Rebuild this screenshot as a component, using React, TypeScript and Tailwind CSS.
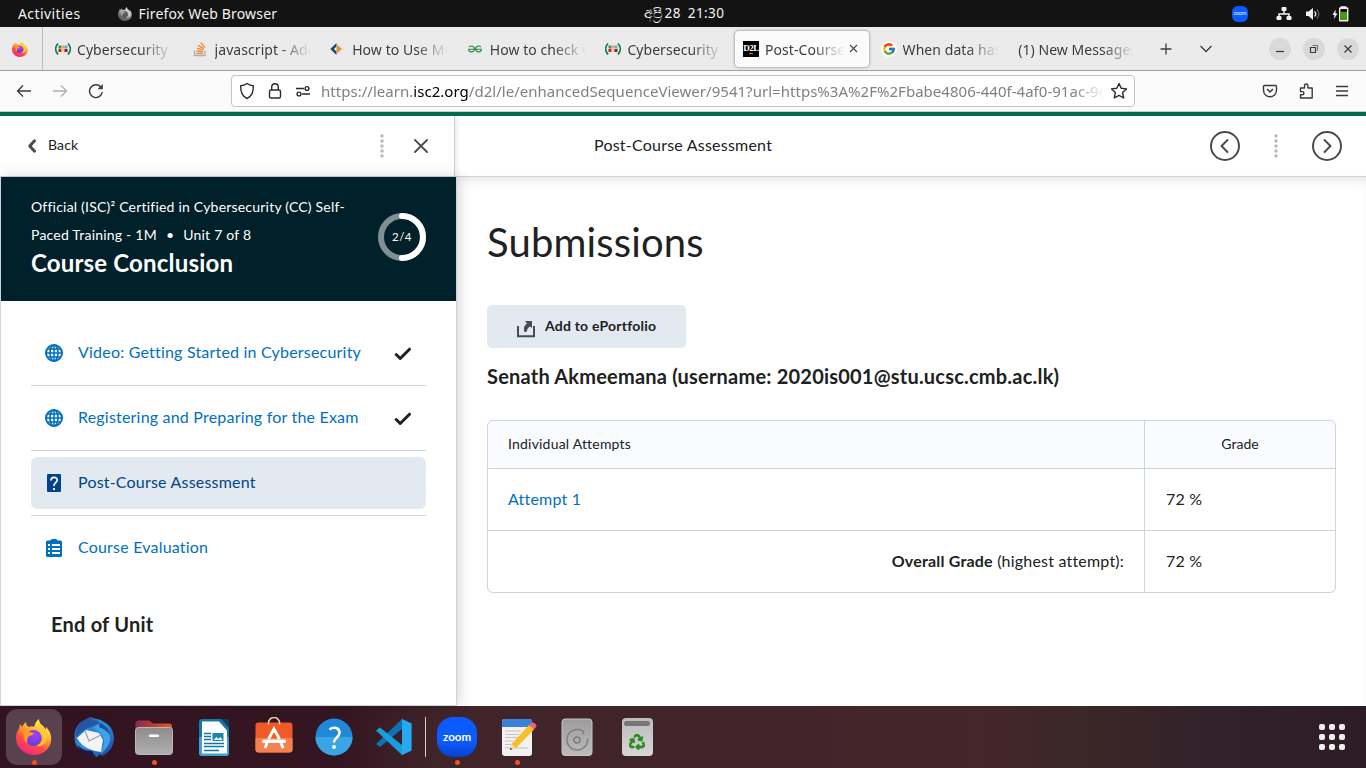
import React from 'react';
import { SiGeeksforgeeks } from 'react-icons/si';
import { FcGoogle } from 'react-icons/fc';
import { FaRecycle } from 'react-icons/fa';

function FirefoxLogo({ size, gray = false, id }: { size: number; gray?: boolean; id: string }) {
  return (
    <svg width={size} height={size} viewBox="0 0 36 36" className={gray ? 'shrink-0 grayscale' : 'shrink-0'}>
      <defs>
        <linearGradient id={id + 'a'} x1="0.8" y1="0" x2="0.25" y2="1">
          <stop offset="0.1" stopColor="#fff44f" />
          <stop offset="0.4" stopColor="#ffa930" />
          <stop offset="0.65" stopColor="#ff5040" />
          <stop offset="1" stopColor="#f0208c" />
        </linearGradient>
        <radialGradient id={id + 'b'} cx="0.6" cy="0.3" r="0.8">
          <stop offset="0" stopColor="#a040ff" />
          <stop offset="1" stopColor="#5a3fd0" />
        </radialGradient>
      </defs>
      <path
        d="M23 0c0 4 2 5 4 7 1 1 2 2 3 4l0-3c4 4 6 9 5 14-1 8-8 14-17 14S0 29 0 19c0-4 1-7 3-9l1-5 2 3c1-2 2-3 4-5 0 3 1 4 3 5 2-1 4-1 5 0 1-3 2-6 5-8z"
        fill={`url(#${id}a)`}
      />
      <circle cx="17.500" cy="19" r="8" fill={`url(#${id}b)`} />
      <path d="M5 11c3-2 6-1 9 2l4 1c-1 2-3 3-5 3-1 2-3 4-1 7-3-1-5-4-4-8-1-2-2-4-3-5z" fill="#ff9a22" />
      <path d="M18 9c5 0 9 4 9 9 0 4-3 8-7 9 6 1 11-3 11-9 0-5-4-10-9-14 1 2 0 4-4 5z" fill="#ffc936" />
    </svg>
  );
}

function IscIcon() {
  return (
    <svg width="16" height="16" viewBox="0 0 16 16" className="shrink-0">
      <path d="M3 2.500C0 5.500 0 10 3 13.500M13 2.500c3 3 3 7.500 0 11" fill="none" stroke="#0b7a50" strokeWidth="1.700" />
      <rect x="3.500" y="4.500" width="3" height="3" fill="#3a8a8c" />
      <rect x="6.500" y="4.500" width="3" height="3" fill="#f0aa3c" />
      <rect x="9.500" y="4.500" width="3" height="3" fill="#7aa3d2" />
      <rect x="3.500" y="8" width="3" height="3" fill="#ca1b36" />
      <rect x="6.500" y="8" width="3" height="3" fill="#efd06b" />
      <rect x="9.500" y="8" width="3" height="3" fill="#881f36" />
    </svg>
  );
}

function StackIcon() {
  return (
    <svg width="16" height="16" viewBox="0 0 16 16" className="shrink-0">
      <path d="M1.500 9.500v5h10.500v-5" fill="none" stroke="#a9abad" strokeWidth="1.300" />
      <path d="M3.500 12.300h6.500M3.500 10l6.500.7M4 7.200l6.300 1.800M5.300 4.400l5.600 3.300M7.800 1.600l4 5" stroke="#f48024" strokeWidth="1.300" fill="none" />
    </svg>
  );
}

function CodeDiamond() {
  return (
    <svg width="16" height="16" viewBox="0 0 16 16" className="shrink-0">
      <path d="M6.500 2v12L.3 8z" fill="#174a68" />
      <path d="M6.500 5.500v5L4 8z" fill="#fff" />
      <path d="M7 4l5 4-5 4z" fill="#f58a25" />
      <path d="M8 2.500L13.500 8 8 13.500" fill="none" stroke="#d8dde0" strokeWidth="1" />
    </svg>
  );
}

function D2lIcon() {
  return (
    <span className="flex h-4 w-4 shrink-0 items-center justify-center bg-black font-['Liberation_Serif',serif] text-[9px] font-bold leading-none tracking-[-0.5px] text-white">
      D<span className="border-b border-orange-500">2</span>L
    </span>
  );
}

type Tab = { icon?: React.ReactNode; label: string; active?: boolean };

const tabs: Tab[] = [
  { icon: <IscIcon />, label: 'Cybersecurity' },
  { icon: <StackIcon />, label: 'javascript - Add' },
  { icon: <CodeDiamond />, label: 'How to Use Mu' },
  { icon: <SiGeeksforgeeks size={14} color="#2f8d46" className="mr-[2px] shrink-0" />, label: 'How to check w' },
  { icon: <IscIcon />, label: 'Cybersecurity' },
  { icon: <D2lIcon />, label: 'Post-Course', active: true },
  {
    icon: (
      <span className="flex h-4 w-4 shrink-0 items-center justify-center rounded-full bg-white">
        <FcGoogle size={14} />
      </span>
    ),
    label: 'When data has',
  },
  { label: '(1) New Messages' },
];

function TopBar() {
  return (
    <div className="grid h-[27px] grid-cols-[1fr_auto_1fr] items-center bg-[#131313] text-[14px] leading-none text-[#f2f2f2]">
      <div className="flex items-center pl-[18px]">
        <span className="tracking-[0.42px]">Activities</span>
        <span className="ml-[37px] flex items-center gap-[7px]">
          <FirefoxLogo size={14} gray id="ffg" />
          <span className="tracking-[0.17px]">Firefox Web Browser</span>
        </span>
      </div>
      <div className="flex items-baseline gap-[7px] pb-px pl-[2px] text-[13.500px] tracking-[0.4px]">
        <span className="whitespace-nowrap">
          <span className="inline-block w-[21px] text-[14px] font-light tracking-[0px]">අප්‍රි</span>28
        </span>
        <span>21:30</span>
      </div>
      <div className="flex items-center justify-end pr-[17px]">
        <span className="flex h-4 w-4 items-center justify-center rounded-[6px] bg-[#0b5cff] text-[5px] text-white">zoom</span>
        <svg className="ml-[28px]" width="16" height="16" viewBox="0 0 16 16" fill="#f2f2f2">
          <rect x="5.500" y="1" width="5" height="4" rx="1" />
          <rect x="0.500" y="10" width="5" height="4" rx="1.200" />
          <rect x="10.500" y="10" width="5" height="4" rx="1.200" />
          <path d="M3 11V8h10v3M8 4v4" fill="none" stroke="#f2f2f2" strokeWidth="1.500" />
        </svg>
        <svg className="ml-3" width="16" height="16" viewBox="0 0 16 16">
          <path d="M2 5.500h2.500L9 2v12l-4.500-4H2z" fill="#f2f2f2" />
          <path d="M10.500 5.500c1.500 1.500 1.500 3.500 0 5" stroke="#f2f2f2" strokeWidth="1.300" fill="none" />
          <path d="M12.800 3.500c2.600 2.800 2.600 6.200 0 9" stroke="#666" strokeWidth="1.200" fill="none" />
        </svg>
        <svg className="ml-3" width="17" height="16" viewBox="0 0 17 16">
          <path d="M3.500 3.500L.5 9H2.500L2 13l3.500-5.500H3.500z" fill="#f2f2f2" />
          <path d="M9 1.500h5V1H9zM7.700 2.200h8v12.500h-8z" fill="none" stroke="#f2f2f2" strokeWidth="1.400" strokeLinejoin="round" />
          <path d="M8.500 6h6.500v8H8.500z" fill="#4e9a06" />
        </svg>
      </div>
    </div>
  );
}

function TabStrip() {
  return (
    <div className="flex h-11 items-center border-b border-[#a0a0a0] bg-[#ebebeb] text-[14px] text-[#3d3d3d]">
      <div className="flex h-full w-[43px] items-center border-r border-[#bdbdbd] pl-3">
        <FirefoxLogo size={16} id="fft" />
      </div>
      <div className="flex h-full items-center pl-[4px]">
        {tabs.map((t, i) => (
          <div key={i} className="flex h-full w-[137.600px] items-center">
            <div
              className={
                t.active
                  ? 'flex h-9 w-[134px] items-center gap-[6px] rounded bg-[#fbfbfb] pl-2 shadow-[0_0_3px_rgba(0,0,0,0.5)]'
                  : 'flex h-9 w-[136px] items-center gap-[6px] pl-2'
              }
            >
              {t.icon}
              <span
                className={
                  (t.active ? 'w-[80px] ' : t.icon ? 'w-[96px] ' : 'w-[116px] ') +
                  'overflow-hidden whitespace-nowrap pt-px tracking-[0.06px] [mask-image:linear-gradient(to_left,transparent,black_32px)]'
                }
              >
                {t.label}
              </span>
              {t.active && (
                <svg width="9" height="9" viewBox="0 0 9 9" className="shrink-0 -ml-[2px]">
                  <path d="M1 1l7 7M8 1L1 8" stroke="#444" strokeWidth="1.100" />
                </svg>
              )}
            </div>
          </div>
        ))}
      </div>
      <svg className="ml-[11px]" width="14" height="14" viewBox="0 0 14 14">
        <path d="M7 1.500v11M1.500 7h11" stroke="#3d3d3d" strokeWidth="1.300" />
      </svg>
      <svg className="ml-[26px]" width="14" height="14" viewBox="0 0 14 14">
        <path d="M1.500 4L7 9.500 12.500 4" fill="none" stroke="#3d3d3d" strokeWidth="1.300" />
      </svg>
      <div className="ml-auto flex gap-3 pr-[7px]">
        <svg width="22" height="22" viewBox="0 0 22 22">
          <circle cx="11" cy="11" r="11" fill="#d9d9d9" />
          <path d="M7 13.500h8" stroke="#3d3d3d" strokeWidth="1.200" />
        </svg>
        <svg width="22" height="22" viewBox="0 0 22 22" fill="none" stroke="#3d3d3d">
          <circle cx="11" cy="11" r="11" fill="#d9d9d9" stroke="none" />
          <path d="M7.500 9.500h5v5h-5z" strokeWidth="1.200" />
          <path d="M9.500 7.500h5v5" strokeWidth="0.700" />
        </svg>
        <svg width="22" height="22" viewBox="0 0 22 22">
          <circle cx="11" cy="11" r="11" fill="#d9d9d9" />
          <path d="M7.500 7.500l7 7M14.500 7.500l-7 7" stroke="#3d3d3d" strokeWidth="1.300" />
        </svg>
      </div>
    </div>
  );
}

function Toolbar() {
  return (
    <div className="flex h-[41px] items-center border-b border-[#ccc] bg-[#fbfbfb]">
      <svg className="ml-4" width="16" height="16" viewBox="0 0 16 16" fill="none" stroke="#3a3a3a" strokeWidth="1.300">
        <path d="M15 8H1.500M7 2.500L1.500 8 7 13.500" />
      </svg>
      <svg className="ml-5" width="16" height="16" viewBox="0 0 16 16" fill="none" stroke="#b0b0b0" strokeWidth="1.300">
        <path d="M1 8h13.500M9 2.500L14.500 8 9 13.500" />
      </svg>
      <svg className="ml-5" width="16" height="16" viewBox="0 0 16 16" fill="none" stroke="#3a3a3a" strokeWidth="1.400">
        <path d="M14.300 9A6.400 6.400 0 1 1 12.800 4" />
        <path d="M14.800 1v5.300H9.500z" fill="#3a3a3a" stroke="none" />
      </svg>
      <div className="ml-[127px] flex h-8 w-[904px] items-center rounded border border-[#c4c4c6] bg-white">
        <svg className="ml-[7px]" width="16" height="18" viewBox="0 0 16 18" fill="none" stroke="#2b2b2b" strokeWidth="1.400">
          <path d="M8 1.500c2 1.500 4 2.200 6.300 2.300C14.600 10 12.500 14.500 8 16.500 3.500 14.500 1.400 10 1.700 3.800 4 3.700 6 3 8 1.500z" strokeLinejoin="round" />
        </svg>
        <svg className="ml-3" width="16" height="18" viewBox="0 0 16 18" fill="none" stroke="#2b2b2b" strokeWidth="1.400">
          <rect x="2.500" y="8" width="11" height="8" rx="1.500" />
          <path d="M4.700 8V5a3.300 3.300 0 0 1 6.600 0v3" />
        </svg>
        <svg className="ml-3" width="16" height="16" viewBox="0 0 16 16" fill="none" stroke="#2b2b2b" strokeWidth="1.400">
          <path d="M1 5.500h8M7 11h8" />
          <circle cx="12" cy="5.500" r="1.900" />
          <circle cx="4" cy="11" r="1.900" />
        </svg>
        <span className="ml-[10px] w-[784px] overflow-hidden whitespace-nowrap text-[15px] leading-[22px] tracking-[0.03px] text-[#808080] [mask-image:linear-gradient(to_left,transparent,black_32px)]">
          https://learn.<span className="text-black">isc2.org</span>/d2l/le/enhancedSequenceViewer/9541?url=https%3A%2F%2Fbabe4806-440f-4af0-91ac-9c
        </span>
        <svg className="ml-[5px] shrink-0" width="18" height="18" viewBox="0 0 18 18" fill="none" stroke="#2b2b2b" strokeWidth="1.400" strokeLinejoin="round">
          <path d="M9 1.500l2.200 4.800 5.300.6-3.900 3.600 1.100 5.500L9 13.400 4.300 16l1.100-5.500L1.500 6.900l5.300-.6z" />
        </svg>
      </div>
      <div className="ml-auto flex gap-5 pr-4">
        <svg width="16" height="16" viewBox="0 0 16 16" fill="none" stroke="#3a3a3a" strokeWidth="1.400">
          <path d="M2.500 2.500h11a1 1 0 0 1 1 1V7c0 9-13 9-13 0V3.500a1 1 0 0 1 1-1z" />
          <path d="M5 6l3 3 3-3" strokeWidth="1.500" />
        </svg>
        <svg width="16" height="16" viewBox="0 0 16 16" fill="none" stroke="#3a3a3a" strokeWidth="1.400" strokeLinejoin="round">
          <path d="M2.500 7.500V5h4V2.700a1.700 1.700 0 0 1 3.400 0V5h4.300v10H2.500v-3.200h1.800a1.600 1.600 0 0 0 0-3.200H2.500z" />
        </svg>
        <svg width="16" height="16" viewBox="0 0 16 16" stroke="#3a3a3a" strokeWidth="1.300">
          <path d="M2 3.500h12M2 8h12M2 12.500h12" />
        </svg>
      </div>
    </div>
  );
}

function Dots() {
  return (
    <svg width="4" height="24" viewBox="0 0 4 24" fill="#b4b9c0">
      {[2, 7, 12, 17, 22].map((y) => (
        <circle key={y} cx="2" cy={y} r="1.700" />
      ))}
    </svg>
  );
}

function CircleArrow({ d }: { d: string }) {
  return (
    <svg width="30" height="30" viewBox="0 0 30 30" fill="none" stroke="#494c4e">
      <circle cx="15" cy="15" r="14" strokeWidth="2" />
      <path d={d} strokeWidth="2" strokeLinecap="round" strokeLinejoin="round" />
    </svg>
  );
}

function PageHeader() {
  return (
    <div className="flex h-[61px] shrink-0 border-b border-[#cfcfcf]">
      <div className="flex w-[455px] items-center border-r border-[#cdd0d4] bg-white pl-7">
        <svg width="9" height="14" viewBox="0 0 9 14">
          <path d="M6.500 1.800L1.800 7l4.700 5.200" fill="none" stroke="#494c4e" strokeWidth="3" strokeLinecap="round" strokeLinejoin="round" />
        </svg>
        <span className="ml-[11px] pb-[3px] text-[14px] tracking-[0.15px] text-[#202122]">Back</span>
        <div className="ml-auto flex items-center gap-[30px] pr-[26px]">
          <Dots />
          <svg width="14" height="14" viewBox="0 0 14 14">
            <path d="M1 1l12 12M13 1L1 13" stroke="#494c4e" strokeWidth="1.800" strokeLinecap="round" />
          </svg>
        </div>
      </div>
      <div className="flex grow items-center bg-white pl-[139px] pr-6 shadow-[inset_4px_0_4px_-2px_rgba(0,0,0,0.08)]">
        <span className="pb-[2px] text-[16px] leading-5 tracking-[0.22px] text-[#202122]">Post-Course Assessment</span>
        <div className="ml-auto flex items-center gap-[34px]">
          <CircleArrow d="M17.500 9l-6 6 6 6" />
          <Dots />
          <CircleArrow d="M12.500 9l6 6-6 6" />
        </div>
      </div>
    </div>
  );
}

function Globe() {
  return (
    <svg width="18" height="18" viewBox="0 0 18 18" fill="none" stroke="#006fbf" strokeWidth="2">
      <circle cx="9" cy="9" r="8" />
      <ellipse cx="9" cy="9" rx="4" ry="8" strokeWidth="1.600" />
      <path d="M9 1v16M1 9h16M2.500 5h13M2.500 13h13" strokeWidth="1.500" />
    </svg>
  );
}

function QuizIcon() {
  return (
    <svg width="18" height="18" viewBox="0 0 18 18">
      <rect x="2" width="14" height="18" rx="1" fill="#004489" />
      <path d="M6 6.500c0-4 6.300-4 6.300-.4C12.300 8.500 9 8.500 9 12" fill="none" stroke="#fff" strokeWidth="1.700" />
      <rect x="8" y="14" width="2" height="2" fill="#fff" />
    </svg>
  );
}

function SurveyIcon() {
  return (
    <svg width="18" height="18" viewBox="0 0 18 18">
      <path d="M2.500 1.500H5L7 0h4l2 1.500h2.500A1.500 1.500 0 0 1 17 3v13.500a1.500 1.500 0 0 1-1.500 1.500h-13A1.500 1.500 0 0 1 1 16.500V3a1.500 1.500 0 0 1 1.500-1.500z" fill="#006fbf" />
      <path d="M3 5h2v2H3zM3 9h2v2H3zM3 13h2v2H3zM7 5h8v2H7zM7 9h8v2H7zM7 13h8v2H7z" fill="#fff" />
    </svg>
  );
}

const units = [
  { icon: <Globe />, label: 'Video: Getting Started in Cybersecurity', done: true, active: false },
  { icon: <Globe />, label: 'Registering and Preparing for the Exam', done: true, active: false },
  { icon: <QuizIcon />, label: 'Post-Course Assessment', done: false, active: true },
  { icon: <SurveyIcon />, label: 'Course Evaluation', done: false, active: false },
];

function Sidebar() {
  return (
    <aside className="z-10 flex w-[457px] shrink-0 flex-col border-x border-b border-[#cdd5dc] bg-white shadow-[2px_0_14px_rgba(0,0,0,0.16)]">
      <div className="flex h-[124px] items-start bg-[#00202a] pl-[30px] pr-[30px] pt-4 text-white">
        <div className="w-[330px]">
          <p className="whitespace-nowrap text-[14px] leading-7 tracking-[0.21px]">
            Official (ISC)² Certified in Cybersecurity (CC) Self-
            <br />
            Paced Training - 1M<span className="mx-[9px]">•</span>Unit 7 of 8
          </p>
          <h2 className="text-[24px] font-bold leading-7 tracking-[0.18px]">Course Conclusion</h2>
        </div>
        <svg className="ml-auto mt-5" width="48" height="48" viewBox="0 0 48 48">
          <circle cx="24" cy="24" r="21" fill="none" stroke="#808f94" strokeWidth="6" />
          <path d="M24 3a21 21 0 0 1 0 42" fill="none" stroke="#fff" strokeWidth="6" strokeLinecap="round" />
          <text x="24" y="28" textAnchor="middle" fill="#fff" fontSize="11.500" letterSpacing="0.5">
            2/4
          </text>
        </svg>
      </div>
      <ul className="px-[30px] pt-5">
        {units.map((u, i) => (
          <li key={u.label} className={i < 3 ? 'border-b border-[#cdd5dc] py-[6px]' : 'py-[6px]'}>
            <div className={u.active ? 'flex h-[52px] items-center rounded-md bg-[#e3e9f1] px-[14px] text-[#004489]' : 'flex h-[52px] items-center px-[14px] text-[#006fbf]'}>
              {u.icon}
              <span className="ml-[15px] pb-[2px] text-[16px] tracking-[0.2px]">{u.label}</span>
              {u.done && (
                <svg className="ml-auto mt-[2px]" width="18" height="14" viewBox="0 0 18 14">
                  <path d="M2.200 7.500l4 4L15.500 2.200" fill="none" stroke="#202122" strokeWidth="3" strokeLinecap="round" strokeLinejoin="round" />
                </svg>
              )}
            </div>
          </li>
        ))}
      </ul>
      <h3 className="mt-[30px] pl-[50px] text-[20px] font-bold leading-7 tracking-[0.22px] text-[#202122]">End of Unit</h3>
    </aside>
  );
}

function Content() {
  return (
    <main className="flex grow flex-col items-start bg-white pl-[30px] pr-[30px] text-[#202122] shadow-[inset_0_8px_12px_-6px_rgba(0,0,0,0.12)]">
      <h1 className="mt-[39px] text-[40px] leading-[52px] tracking-[0.16px]">Submissions</h1>
      <button className="mt-[37px] flex h-[43px] w-[199px] items-center rounded-[5px] bg-[#e3e9f1] pl-[30px] text-[14px] font-bold">
        <svg className="mt-[5px]" width="18" height="18" viewBox="0 0 18 18">
          <path d="M1 6v10.200h16V6" fill="none" stroke="#494c4e" strokeWidth="2" />
          <path d="M8 1h7v7l-2-1.500c-2 1-3 3-3.500 5.500H7.500C6 8 7.500 5.500 10 3.500z" fill="#494c4e" />
        </svg>
        <span className="ml-[10px] pb-[3px] tracking-[0.22px]">Add to ePortfolio</span>
      </button>
      <h2 className="mt-[14px] text-[20px] font-bold leading-7 tracking-[0.21px]">Senath Akmeemana (username: 2020is001@stu.ucsc.cmb.ac.lk)</h2>
      <div className="mt-[30px] grid h-[173px] w-[849px] grid-cols-[656px_1fr] grid-rows-[47px_61px_61px] gap-px overflow-hidden rounded-md border border-[#cdd5dc] bg-[#cdd5dc] text-[16px] tracking-[0.2px] *:flex *:items-center *:bg-white *:px-5 *:pb-[2px]">
        <div className="!bg-[#f9fbff] text-[14px]">Individual Attempts</div>
        <div className="justify-center !bg-[#f9fbff] text-[14px] tracking-[0.05px]">Grade</div>
        <div className="text-[#006fbf]">Attempt 1</div>
        <div className="!pl-[21px]">72 %</div>
        <div className="justify-end whitespace-pre">
          <b>Overall Grade</b> (highest attempt):
        </div>
        <div className="!pl-[21px]">72 %</div>
      </div>
    </main>
  );
}

function Thunderbird() {
  return (
    <svg width="40" height="40" viewBox="0 0 40 40">
      <defs>
        <linearGradient id="tb" x1="0" y1="0" x2="1" y2="1">
          <stop stopColor="#2a62b4" />
          <stop offset="0.5" stopColor="#2f8fe0" />
          <stop offset="1" stopColor="#1d3f92" />
        </linearGradient>
      </defs>
      <path d="M17 0c2 2 8 1 13 5 6 3 10 9 10 16 0 8-5 15-12 18l-2-2-3 3c-6-1-16-5-21-12C-1 19 0 9 9 4c3-2 5-3 8-4z" fill="url(#tb)" />
      <path d="M17 0c0 3 5 2 9 6l-9 4c-5 1-9 4-15 10C1 12 4 6 9 4c3-2 5-3 8-4z" fill="#2456a6" />
      <path d="M24 8c7 1 12 6 12 13 0 6-4 12-10 16 3-7 6-13 2-19-2-4-5-6-9-7z" fill="#3ba3ea" />
      <path d="M26 6c5 2 9 6 10 12-3-4-6-6-11-8z" fill="#1c4c9c" />
      <path d="M3 21l9-8 13 3 4 7-2 12c-7-1-18-3-24-14z" fill="#f3f3f6" />
      <path d="M11 14l4 10 12-6" fill="none" stroke="#9aa0b0" strokeWidth="1.200" />
      <path d="M3 27c3 4 8 7 15 7l4 6c-9 0-16-5-19-13z" fill="#241848" />
    </svg>
  );
}

function Files() {
  return (
    <svg width="40" height="40" viewBox="0 0 40 40">
      <defs>
        <linearGradient id="fl"><stop stopColor="#8a2a50" /><stop offset="1" stopColor="#e95420" /></linearGradient>
        <linearGradient id="fg" x1="0" y1="0" x2="0" y2="1"><stop stopColor="#8c8c8c" /><stop offset="1" stopColor="#b0b0b0" /></linearGradient>
      </defs>
      <path d="M4 3.500h11l4 3h16a3 3 0 0 1 3 3v14H1.500v-17a3 3 0 0 1 3-3z" fill="url(#fl)" />
      <rect x="1.500" y="10.500" width="37" height="27" rx="3" fill="url(#fg)" stroke="#b8b8b8" strokeWidth="1" />
      <rect x="15" y="17.500" width="10" height="2.500" rx="1" fill="#fff" />
    </svg>
  );
}

function Writer() {
  return (
    <svg width="40" height="40" viewBox="0 0 40 40">
      <rect x="5" y="2" width="30" height="37" rx="3" fill="#107aaa" />
      <path d="M5 20h30v16a3 3 0 0 1-3 3H8a3 3 0 0 1-3-3z" fill="#3aa3cf" />
      <path d="M8 4.500h17l8 9v23H8z" fill="#fff" />
      <path d="M27 2h8v9z" fill="#173c58" />
      <rect x="18.500" y="16" width="11" height="8" fill="#1687b8" />
      <path d="M19.500 23l3-3 2 2 2-2 2 3z" fill="#fff" />
      <path d="M10 16.500h7M10 19.500h7M10 22.500h7M10 26.500h20M10 29.500h20M10 33.500h15" stroke="#1474a3" strokeWidth="1.300" />
    </svg>
  );
}

function Software() {
  return (
    <svg width="40" height="40" viewBox="0 0 40 40">
      <rect x="1.500" y="5.500" width="37" height="30" rx="3" fill="#f05a26" />
      <path d="M1.500 21h37v11.500a3 3 0 0 1-3 3h-31a3 3 0 0 1-3-3z" fill="#f48150" />
      <path d="M14.500 7.500V6a5.500 5.500 0 0 1 11 0v1.500" fill="none" stroke="#f0d2a8" strokeWidth="1.500" />
      <path d="M14.500 22L20 12l5.500 10M11 31l2-5M29 31l-2-5" fill="none" stroke="#fff" strokeWidth="3" />
      <rect x="8" y="22.500" width="24" height="3.500" rx="1.500" fill="#fff" />
    </svg>
  );
}

function Help() {
  return (
    <svg width="40" height="40" viewBox="0 0 40 40">
      <circle cx="20" cy="20" r="18.500" fill="#1f88d8" />
      <path d="M1.500 20a18.500 18.500 0 0 0 37 0z" fill="#3ba4e4" />
      <path d="M15.500 12.500c4-3 10-2 10 3 0 5-5.500 5-5.500 10" fill="none" stroke="#fff" strokeWidth="2.600" />
      <circle cx="20" cy="30" r="2" fill="#fff" />
    </svg>
  );
}

function VsCode() {
  return (
    <svg width="40" height="40" viewBox="0 0 40 40">
      <path d="M28 2l9.500 4.500v27L28 38V12L6 30l-4-3z" fill="#0e70b5" />
      <path d="M6 10.500L28 28v10L2 13.500z" fill="#169ee0" />
      <path d="M28 2l9.500 4.500v27L28 38z" fill="#26a9ef" />
    </svg>
  );
}

function TextEditor() {
  return (
    <svg width="40" height="40" viewBox="0 0 40 40">
      <rect x="5" y="2" width="30" height="37" rx="3" fill="#f2f2f0" />
      <path d="M8 2h24a3 3 0 0 1 3 3v5H5V5a3 3 0 0 1 3-3z" fill="#3a7fd8" />
      <path d="M8 14h16M8 17.500h14M8 20.500h12M8 24h8M8 27.500h6M8 31h23" stroke="#c2c0bd" strokeWidth="1.200" />
      <path d="M13 33l1.500-6L32 8l5 4.500L19 31z" fill="#f6bf2b" />
      <path d="M13 33l1.500-6 4.500 4z" fill="#efd9b0" />
      <path d="M13 33l.6-2.300 1.700 1.600z" fill="#333" />
      <path d="M32 8l3-2.500c1-1 5 2.500 4.500 4L37 12.500z" fill="#ee6470" />
    </svg>
  );
}

function Disk() {
  return (
    <svg width="40" height="40" viewBox="0 0 40 40">
      <defs>
        <linearGradient id="dk" x1="0" y1="0" x2="0" y2="1"><stop stopColor="#9c9c9c" /><stop offset="1" stopColor="#bcbcbc" /></linearGradient>
      </defs>
      <rect x="5" y="2" width="30" height="36.500" rx="3" fill="url(#dk)" stroke="#c4c4c4" />
      <path d="M26.500 14.500a10.300 10.300 0 1 0 4 7M26.500 14.500v3" fill="none" stroke="#7d7d7d" strokeWidth="1.400" />
      <circle cx="20" cy="23" r="3" fill="none" stroke="#7d7d7d" strokeWidth="1.500" />
    </svg>
  );
}

function Trash() {
  return (
    <span className="flex h-[38px] w-[31px] flex-col items-center rounded bg-gradient-to-b from-[#bcbcbc] to-[#d6d6d6] pt-[3px]">
      <span className="h-[5px] w-[26px] rounded bg-[#777]" />
      <FaRecycle size={16} color="#298a20" stroke="#298a20" strokeWidth={24} className="mt-2" />
    </span>
  );
}

const apps: { icon: React.ReactNode; running?: boolean; current?: boolean }[] = [
  { icon: <FirefoxLogo size={36} id="ffd" />, running: true, current: true },
  { icon: <Thunderbird /> },
  { icon: <Files />, running: true },
  { icon: <Writer /> },
  { icon: <Software /> },
  { icon: <Help /> },
  { icon: <VsCode /> },
];

const openApps: { icon: React.ReactNode; running?: boolean; current?: boolean }[] = [
  {
    icon: (
      <span className="flex h-10 w-10 items-center justify-center rounded-[16px] bg-gradient-to-t from-[#0a3fd0] to-[#0b5cff] to-40% font-['Lato',sans-serif] text-[11.500px] font-bold leading-none text-white">
        zoom
      </span>
    ),
    running: true,
  },
  { icon: <TextEditor />, running: true },
  { icon: <Disk /> },
  { icon: <Trash /> },
];

function DockItem({ icon, running, current }: { icon: React.ReactNode; running?: boolean; current?: boolean }) {
  return (
    <div className={current ? 'relative flex h-14 w-14 items-center justify-center rounded-[11px] bg-[#59424d]' : 'relative flex h-14 w-14 items-center justify-center'}>
      {icon}
      {running && <span className="absolute bottom-0 left-[25.500px] h-[5px] w-[5px] rounded-full bg-[#e95420]" />}
    </div>
  );
}

function Dock() {
  return (
    <div className="flex h-[62px] items-center bg-[linear-gradient(90deg,#321420_0%,#341622_25%,#41242a_32%,#42252a_60%,#45262a_72%,#3a2727_79%,#33222a_88%,#2d1c25_100%)] px-[6px]">
      <div className="flex gap-1">
        {apps.map((a, i) => (
          <DockItem key={i} {...a} />
        ))}
      </div>
      <div className="ml-[3px] mr-[3px] h-10 w-px bg-[#d5cdd0]" />
      <div className="flex gap-1">
        {openApps.map((a, i) => (
          <DockItem key={i} {...a} />
        ))}
      </div>
      <div className="ml-auto grid grid-cols-3 gap-1 pr-[15px]">
        {Array.from({ length: 9 }, (_, i) => (
          <span key={i} className="h-[6px] w-[6px] rounded-[2px] bg-[#f0eeec]" />
        ))}
      </div>
    </div>
  );
}

export default function App() {
  return (
    <div className="flex h-[768px] w-[1366px] flex-col overflow-hidden bg-white font-['Noto_Sans',sans-serif]">
      <TopBar />
      <TabStrip />
      <Toolbar />
      <div className="flex min-h-0 grow flex-col border-t-4 border-[#006b4d] font-['Lato',sans-serif]">
        <PageHeader />
        <div className="flex min-h-0 grow">
          <Sidebar />
          <Content />
        </div>
      </div>
      <Dock />
    </div>
  );
}
